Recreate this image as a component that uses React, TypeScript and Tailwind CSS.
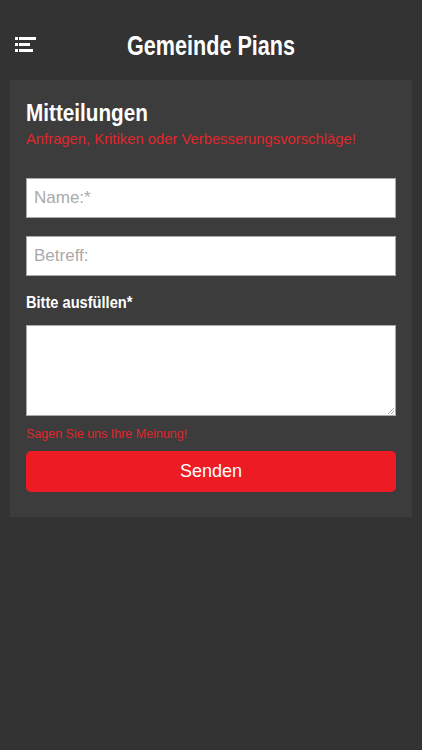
import React from "react";

export default function App() {
  const sans = { fontFamily: '"Liberation Sans", Arial, sans-serif' };
  return (
    <div className="w-[422px] h-[750px] bg-[#333333] flex flex-col" style={sans}>
      <div className="relative h-[80px] flex items-center justify-center pt-[12px]">
        <svg className="absolute left-[15px] top-[37px]" width="22" height="16" viewBox="0 0 22 16">
          <rect x="0" y="0" width="3" height="3" fill="#fff" />
          <rect x="4" y="0" width="17" height="3" fill="#fff" />
          <rect x="0" y="6" width="3" height="3" fill="#fff" />
          <rect x="4" y="6" width="11" height="3" fill="#fff" />
          <rect x="0" y="12" width="3" height="3" fill="#fff" />
          <rect x="4" y="12" width="14" height="3" fill="#fff" />
        </svg>
        <h1 className="text-white text-[27px] font-bold leading-none inline-block scale-x-[0.8] origin-center whitespace-nowrap">Gemeinde Pians</h1>
      </div>
      <div className="mx-[10px] bg-[#3c3c3c] px-[16px] pt-[19px] pb-[25px] flex flex-col">
        <h2 className="text-white text-[23px] font-bold leading-[28px] origin-left scale-x-[0.9] whitespace-nowrap">Mitteilungen</h2>
        <p className="text-[#e0262b] text-[14.8px] leading-[18px] mt-[3px]">Anfragen, Kritiken oder Verbesserungsvorschläge!</p>
        <div className="mt-[30px] h-[40px] bg-white border border-[#a9a9a9] flex items-center px-[7px]">
          <span className="text-[#aaaaaa] text-[17px]">Name:*</span>
        </div>
        <div className="mt-[18px] h-[40px] bg-white border border-[#a9a9a9] flex items-center px-[7px]">
          <span className="text-[#aaaaaa] text-[17px]">Betreff:</span>
        </div>
        <p className="text-white text-[17px] font-bold mt-[17px] leading-[20px] origin-left scale-x-[0.86] whitespace-nowrap">Bitte ausfüllen*</p>
        <div className="relative mt-[12px] h-[91px] bg-white border border-[#a9a9a9]">
          <svg className="absolute right-[1px] bottom-[1px]" width="6" height="6" viewBox="0 0 6 6">
            <path d="M6 0 L0 6 M6 3 L3 6" stroke="#aaa" strokeWidth="1" />
          </svg>
        </div>
        <p className="text-[#e0262b] text-[12.5px] mt-[11px] leading-[14px]">Sagen Sie uns Ihre Meinung!</p>
        <div className="mt-[10px] h-[41px] bg-[#ed1c24] rounded-[5px] flex items-center justify-center">
          <span className="text-white text-[18px]">Senden</span>
        </div>
      </div>
    </div>
  );
}
